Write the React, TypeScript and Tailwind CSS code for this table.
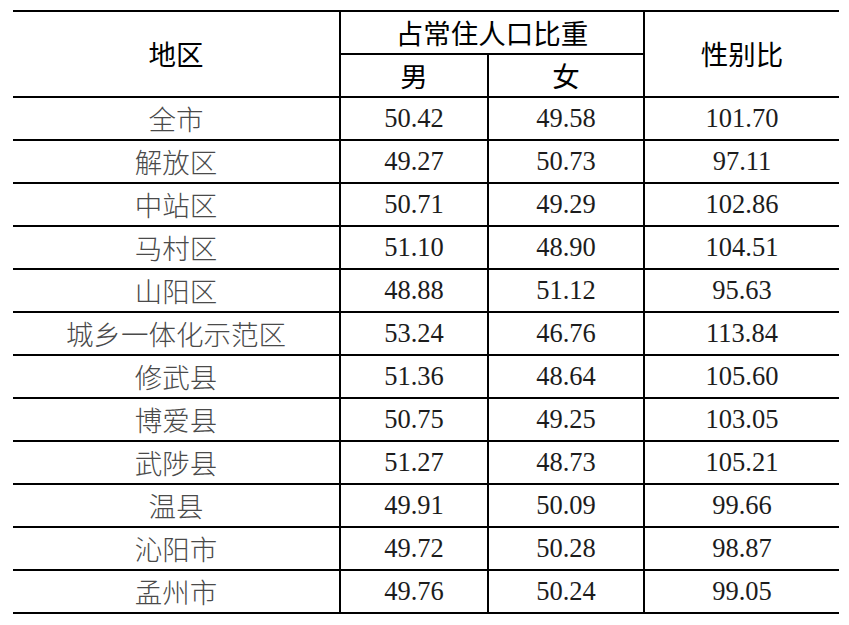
const rows: [string, string, string, string][] = [
  ['全市', '50.42', '49.58', '101.70'],
  ['解放区', '49.27', '50.73', '97.11'],
  ['中站区', '50.71', '49.29', '102.86'],
  ['马村区', '51.10', '48.90', '104.51'],
  ['山阳区', '48.88', '51.12', '95.63'],
  ['城乡一体化示范区', '53.24', '46.76', '113.84'],
  ['修武县', '51.36', '48.64', '105.60'],
  ['博爱县', '50.75', '49.25', '103.05'],
  ['武陟县', '51.27', '48.73', '105.21'],
  ['温县', '49.91', '50.09', '99.66'],
  ['沁阳市', '49.72', '50.28', '98.87'],
  ['孟州市', '49.76', '50.24', '99.05'],
];

const sans = "font-['Noto_Sans_CJK_SC','Noto_Sans',sans-serif]";
const serif = "font-['Liberation_Serif','Noto_Sans_CJK_SC',serif]";

export default function App() {
  return (
    <div className="w-[849px] h-[625px] bg-white pt-[10px] pl-[13px]">
      <table className="w-[826px] table-fixed border-collapse">
        <colgroup>
          <col className="w-[327px]" />
          <col className="w-[148px]" />
          <col className="w-[156px]" />
          <col className="w-[195px]" />
        </colgroup>
        <thead className={`${sans} text-[27.5px] text-black`}>
          <tr className="h-[43px]">
            <th rowSpan={2} className="border-y-2 border-r-2 border-black font-normal leading-none">
              地区
            </th>
            <th colSpan={2} className="border-2 border-black font-normal leading-none">
              占常住人口比重
            </th>
            <th rowSpan={2} className="border-y-2 border-l-2 border-black font-normal leading-none">
              性别比
            </th>
          </tr>
          <tr className="h-[43px]">
            <th className="border-2 border-black font-normal leading-none">男</th>
            <th className="border-2 border-black font-normal leading-none">女</th>
          </tr>
        </thead>
        <tbody className={`${serif} text-[26.5px] text-[#1c1c1c]`}>
          {rows.map((r) => (
            <tr key={r[0]} className="h-[43px]">
              <td className={`${sans} font-light text-[27.5px] text-[#4a4a4a] border-y-2 border-r-2 border-black text-center leading-none`}>
                {r[0]}
              </td>
              <td className="border-2 border-black text-center leading-none">{r[1]}</td>
              <td className="border-2 border-black text-center leading-none">{r[2]}</td>
              <td className="border-y-2 border-l-2 border-black text-center leading-none">{r[3]}</td>
            </tr>
          ))}
        </tbody>
      </table>
    </div>
  );
}
